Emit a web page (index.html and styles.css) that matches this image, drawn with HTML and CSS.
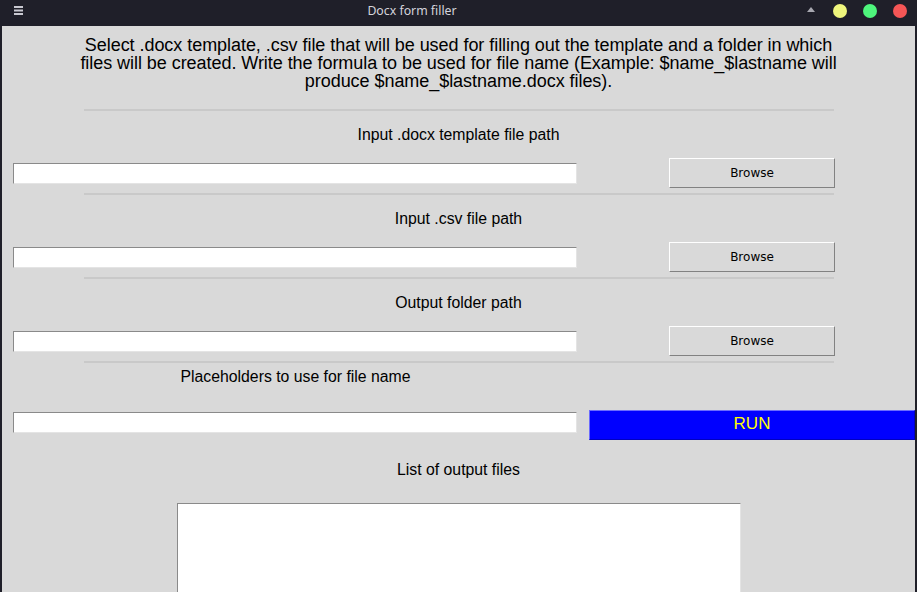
FILE: index.html
```html
<!DOCTYPE html>
<html lang="en">
<head>
<meta charset="utf-8">
<title>Docx form filler</title>
<link rel="stylesheet" href="styles.css">
</head>
<body>
<header class="titlebar">
  <div class="tb-left">
    <svg class="menu-icon" width="9" height="9" viewBox="0 0 9 9"><rect x="0" y="0" width="9" height="2" fill="#c9c9d1"/><rect x="0" y="3.5" width="9" height="2" fill="#c9c9d1"/><rect x="0" y="7" width="9" height="2" fill="#c9c9d1"/></svg>
  </div>
  <div class="tb-title">Docx form filler</div>
  <div class="tb-right">
    <svg class="tb-arrow" width="8" height="5" viewBox="0 0 8 5"><polygon points="4,0 8,5 0,5" fill="#a8a8b0"/></svg>
    <span class="dot dot-yellow"></span>
    <span class="dot dot-green"></span>
    <span class="dot dot-red"></span>
  </div>
</header>
<main class="app">
  <p class="intro">Select .docx template, .csv file that will be used for filling out the template and a folder in which<br>files will be created. Write the formula to be used for file name (Example: $name_$lastname will<br>produce $name_$lastname.docx files).</p>

  <section class="field">
    <div class="sep"></div>
    <div class="field-label">Input .docx template file path</div>
    <div class="row">
      <input class="entry" type="text">
      <button class="browse" type="button">Browse</button>
    </div>
  </section>

  <section class="field">
    <div class="sep"></div>
    <div class="field-label">Input .csv file path</div>
    <div class="row">
      <input class="entry" type="text">
      <button class="browse" type="button">Browse</button>
    </div>
  </section>

  <section class="field">
    <div class="sep"></div>
    <div class="field-label">Output folder path</div>
    <div class="row">
      <input class="entry" type="text">
      <button class="browse" type="button">Browse</button>
    </div>
  </section>

  <section class="field field-last">
    <div class="sep"></div>
    <div class="label-row">
      <div class="side-label">Placeholders to use for file name</div>
    </div>
    <div class="row">
      <input class="entry entry-top" type="text">
      <button class="run" type="button">RUN</button>
    </div>
  </section>

  <div class="list-label">List of output files</div>
  <div class="listbox"></div>
</main>
</body>
</html>
```

FILE: styles.css
```css
html, body {
  margin: 0;
  padding: 0;
}
body {
  background: #1f1f29;
  width: 917px;
  height: 592px;
  overflow: hidden;
  font-family: "Liberation Sans", Arial, sans-serif;
  color: #000;
}
.titlebar {
  height: 26px;
  display: flex;
  align-items: center;
  padding-bottom: 5px;
  box-sizing: border-box;
}
.tb-left {
  width: 28px;
  padding-left: 14px;
  box-sizing: border-box;
  display: flex;
  align-items: center;
}
.tb-title {
  flex: 1;
  text-align: center;
  font-family: "Noto Sans", sans-serif;
  font-size: 12.3px;
  color: #d4d4dc;
  line-height: 14px;
  padding-top: 1px;
}
.tb-right {
  width: 121px;
  padding-left: 11px;
  padding-right: 10px;
  box-sizing: border-box;
  display: flex;
  align-items: center;
}
.tb-arrow {
  margin-right: 18px;
  margin-top: -2px;
}
.dot {
  width: 14px;
  height: 14px;
  border-radius: 50%;
  display: block;
}
.dot + .dot { margin-left: 16px; }
.dot-yellow { background: #eef57c; }
.dot-green { background: #4ef57c; }
.dot-red { background: #f55656; }

.app {
  margin: 0 2px;
  width: 913px;
  height: 566px;
  background: #d9d9d9;
  overflow: hidden;
}
.intro {
  margin: 0 0 19px;
  padding-top: 10px;
  font-size: 18px;
  letter-spacing: -0.05px;
  line-height: 18px;
  text-align: center;
}
.sep {
  width: 750px;
  height: 2px;
  margin: 0 auto;
  background: #c9c9c9;
}
.field {
  padding-bottom: 5px;
}
.field-last {
  padding-bottom: 0;
}
.field-label {
  height: 47px;
  box-sizing: border-box;
  padding-top: 15px;
  font-size: 15.8px;
  line-height: 18px;
  text-align: center;
}
.label-row {
  height: 47px;
  display: grid;
  grid-template-columns: 587px 1fr;
}
.side-label {
  padding-top: 5px;
  font-size: 15.8px;
  line-height: 18px;
  text-align: center;
}
.row {
  height: 30px;
  display: grid;
  grid-template-columns: 587px 1fr;
  align-items: center;
}
.entry {
  margin: 0 0 0 11px;
  width: 564px;
  height: 21px;
  box-sizing: border-box;
  padding: 0;
  background: #fff;
  border-style: solid;
  border-width: 1px;
  border-color: #8a8a8a #e4e4e4 #e4e4e4 #8a8a8a;
  outline: none;
}
.entry-top {
  align-self: start;
  margin-top: 2px;
}
.browse {
  justify-self: center;
  width: 166px;
  height: 30px;
  box-sizing: border-box;
  margin: 0;
  padding: 0;
  background: #d9d9d9;
  border-style: solid;
  border-width: 1px;
  border-color: #ffffff #828282 #828282 #ffffff;
  font-family: "DejaVu Sans", sans-serif;
  font-size: 12px;
  color: #000;
}
.run {
  width: 100%;
  height: 30px;
  box-sizing: border-box;
  margin: 0;
  padding: 0 0 2px;
  background: #0000ff;
  border-style: solid;
  border-width: 1px;
  border-color: #6b6bff #0000c0 #0000c0 #6b6bff;
  font-family: "Liberation Sans", Arial, sans-serif;
  font-size: 17px;
  color: #ffff00;
}
.list-label {
  margin-top: 21px;
  font-size: 15.8px;
  line-height: 18px;
  text-align: center;
}
.listbox {
  margin: 24px auto 0;
  width: 564px;
  height: 120px;
  box-sizing: border-box;
  background: #fff;
  border-style: solid;
  border-width: 1px;
  border-color: #8a8a8a #e4e4e4 #e4e4e4 #8a8a8a;
}
```
